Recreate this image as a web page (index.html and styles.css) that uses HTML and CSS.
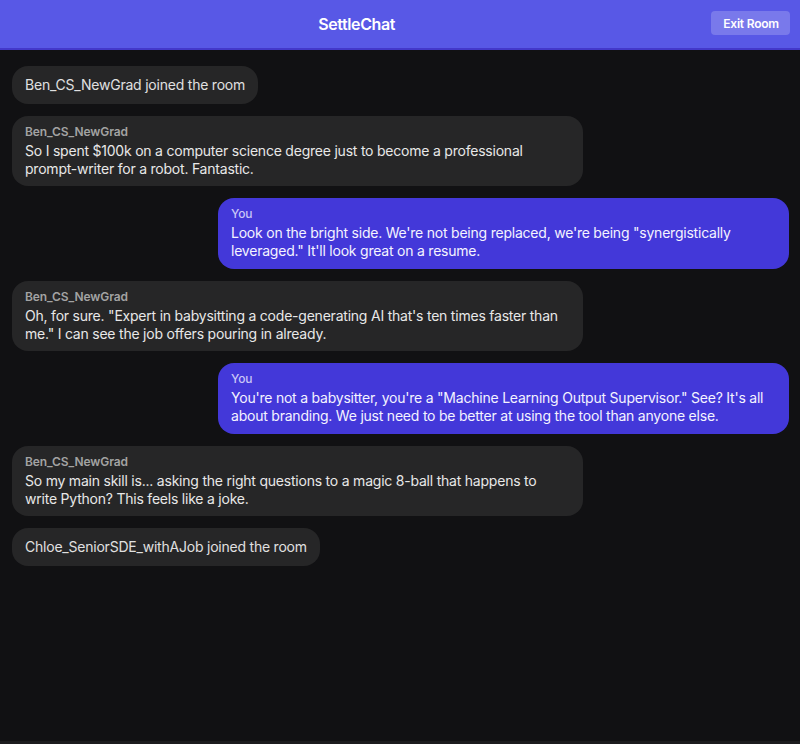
FILE: index.html
```html
<!DOCTYPE html>
<html lang="en">
<head>
<meta charset="utf-8">
<title>SettleChat</title>
<link rel="stylesheet" href="styles.css">
</head>
<body>
<div class="app">
  <header class="topbar">
    <span class="spacer"></span>
    <h1 class="title">SettleChat</h1>
    <button class="exit-btn">Exit Room</button>
  </header>
  <main class="messages">
    <div class="bubble system">Ben_CS_NewGrad joined the room</div>
    <div class="bubble other">
      <div class="author">Ben_CS_NewGrad</div>
      <div class="text">So I spent $100k on a computer science degree just to become a professional prompt-writer for a robot. Fantastic.</div>
    </div>
    <div class="bubble mine">
      <div class="author">You</div>
      <div class="text">Look on the bright side. We're not being replaced, we're being "synergistically leveraged." It'll look great on a resume.</div>
    </div>
    <div class="bubble other">
      <div class="author">Ben_CS_NewGrad</div>
      <div class="text">Oh, for sure. "Expert in babysitting a code-generating AI that's ten times faster than me." I can see the job offers pouring in already.</div>
    </div>
    <div class="bubble mine">
      <div class="author">You</div>
      <div class="text">You're not a babysitter, you're a "Machine Learning Output Supervisor." See? It's all about branding. We just need to be better at using the tool than anyone else.</div>
    </div>
    <div class="bubble other">
      <div class="author">Ben_CS_NewGrad</div>
      <div class="text">So my main skill is... asking the right questions to a magic 8-ball that happens to write Python? This feels like a joke.</div>
    </div>
    <div class="bubble system">Chloe_SeniorSDE_withAJob joined the room</div>
  </main>
  <footer class="composer"></footer>
</div>
</body>
</html>
```

FILE: styles.css
```css
* { box-sizing: border-box; }
html, body {
  margin: 0;
  padding: 0;
  height: 100%;
  background: #111113;
  font-family: Inter, "Noto Sans", "Liberation Sans", sans-serif;
  color: #e5e5e5;
  overflow: hidden;
}
.app {
  height: 744px;
  display: flex;
  flex-direction: column;
}
.topbar {
  height: 50px;
  flex: none;
  background: #5858e6;
  border-bottom: 2px solid #4338ca;
  display: flex;
  align-items: center;
  justify-content: space-between;
  padding: 0 10px 0 10px;
}
.spacer { width: 0; }
.title {
  margin: 0;
  font-size: 16px;
  font-weight: 600;
  color: #ffffff;
  letter-spacing: -0.4px;
  margin-left: -8px;
}
.exit-btn {
  font-family: inherit;
  font-size: 12px;
  font-weight: 600;
  color: #ffffff;
  background: rgba(255, 255, 255, 0.2);
  border: none;
  border-radius: 4px;
  height: 24px;
  padding: 0 11px 0 12px;
  margin-top: -2px;
  letter-spacing: -0.2px;
}
.messages {
  flex: 1;
  padding: 16px 11px 16px 12px;
  display: flex;
  flex-direction: column;
  align-items: flex-start;
  gap: 12px;
  overflow: hidden;
}
.bubble {
  max-width: 571px;
  border-radius: 16px;
  font-size: 14px;
  line-height: 18px;
  letter-spacing: -0.22px;
}
.system {
  background: #262627;
  color: #e0e0e0;
  padding: 10px 13px;
}
.other {
  background: #262627;
  padding: 8px 13px;
}
.mine {
  align-self: flex-end;
  background: #4338d9;
  padding: 8px 13px 9px;
}
.author {
  font-size: 12px;
  line-height: 16px;
  font-weight: 600;
  margin-bottom: 2px;
  letter-spacing: -0.1px;
}
.other .author { color: #a3a3a3; }
.mine .author { color: #c9c6f7; font-weight: 500; }
.other .text { color: #e8e8e8; }
.mine .text { color: #f4f3ff; }
.composer {
  flex: none;
  height: 3px;
  background: #1c1c1e;
}
```
